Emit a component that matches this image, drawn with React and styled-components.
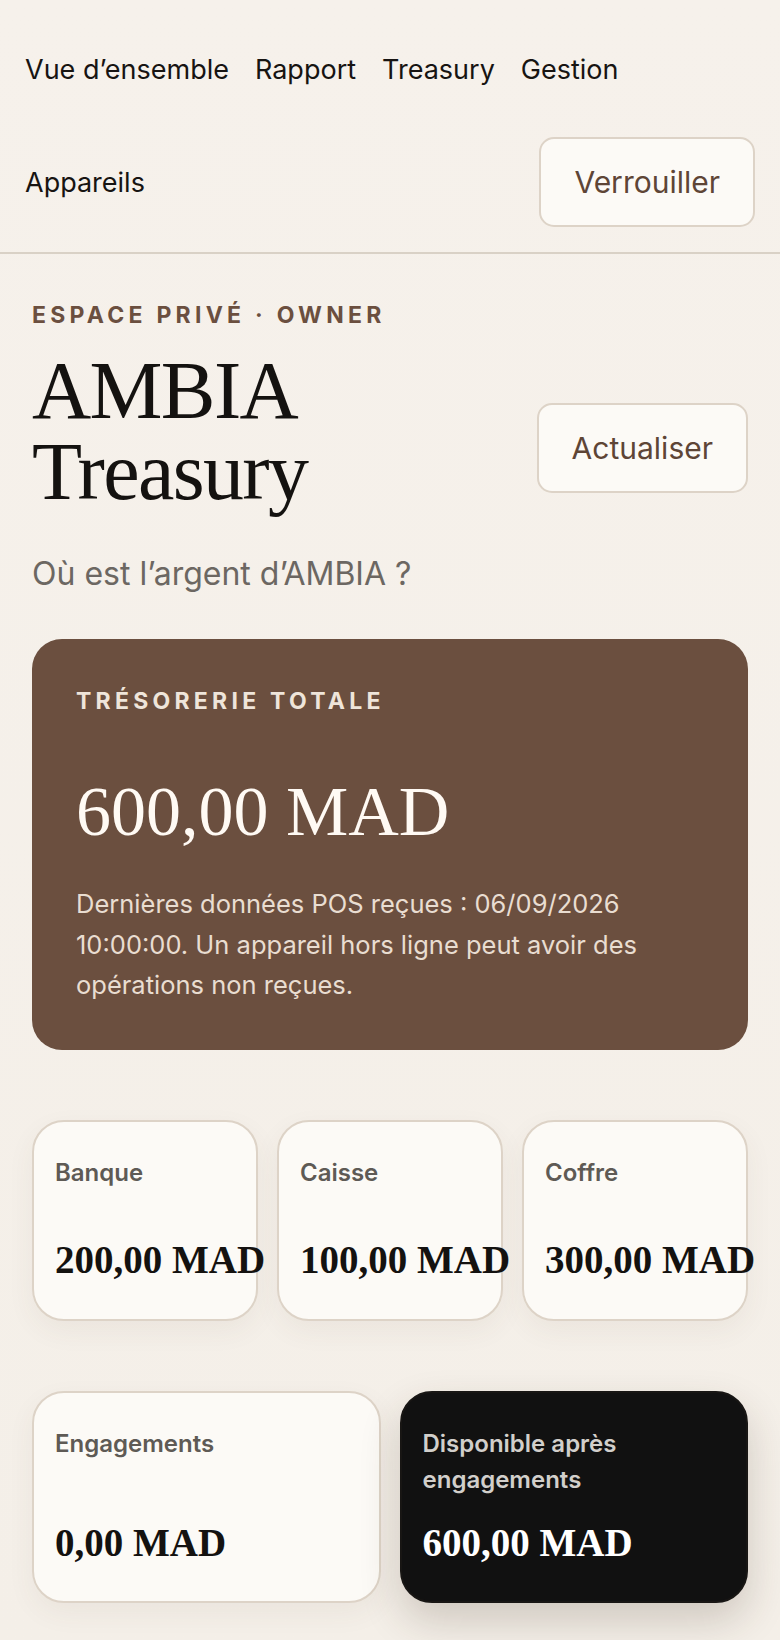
import React from "react";
import styled, { createGlobalStyle } from "styled-components";

const Global = createGlobalStyle`
  * { box-sizing: border-box; }
  html, body { margin: 0; padding: 0; background: #f5f0e9; }
  body {
    font-family: Inter, "Noto Sans", "Liberation Sans", sans-serif;
    color: #171412;
    -webkit-font-smoothing: antialiased;
  }
  #root { min-height: 1640px; }
`;

const Page = styled.div`
  min-height: 1640px;
  background: linear-gradient(180deg, #f6f1eb 0%, #f4efe8 100%);
`;

const Header = styled.header`
  display: flex;
  flex-wrap: wrap;
  align-items: center;
  column-gap: 26px;
  row-gap: 23px;
  padding: 24px 25px 25px 25px;
  border-bottom: 2px solid #d9d1c6;
`;

const NavLink = styled.a`
  display: flex;
  align-items: center;
  min-height: 90px;
  font-size: 27px;
  font-weight: 400;
  color: #171412;
  text-decoration: none;
`;

const GhostButton = styled.button`
  margin-left: auto;
  flex-shrink: 0;
  height: 90px;
  padding: 0 33px;
  border-radius: 15px;
  border: 2px solid #ddd3c7;
  background: #fcfaf6;
  color: #5e4536;
  font-family: Inter, "Noto Sans", sans-serif;
  font-size: 30px;
  font-weight: 400;
  cursor: pointer;
`;

const Main = styled.main`
  display: flex;
  flex-direction: column;
  padding: 48px 32px 40px 32px;
`;

const Hero = styled.section`
  display: flex;
  align-items: center;
  justify-content: space-between;
  gap: 24px;
`;

const HeroText = styled.div`
  display: flex;
  flex-direction: column;
`;

const Eyebrow = styled.div`
  font-size: 23px;
  font-weight: 700;
  letter-spacing: 0.185em;
  color: #6b4f3f;
  line-height: 1.2;
`;

const Title = styled.h1`
  margin: 20px 0 0 0;
  font-family: "Liberation Serif", "Times New Roman", serif;
  font-weight: 400;
  font-size: 82px;
  line-height: 81px;
  letter-spacing: -0.02em;
  color: #141210;
`;

const Subtitle = styled.p`
  margin: 42px 0 0 0;
  font-size: 32px;
  line-height: 1.25;
  color: #6c6762;
`;

const TotalCard = styled.section`
  margin-top: 45px;
  background: #6b4f3f;
  border-radius: 30px;
  padding: 49px 44px 44px 44px;
  color: #f3e9df;
`;

const CardEyebrow = styled.div`
  font-size: 23px;
  font-weight: 700;
  letter-spacing: 0.185em;
  line-height: 1.2;
  color: #efe5da;
`;

const TotalAmount = styled.div`
  margin-top: 55px;
  font-family: "Liberation Serif", "Times New Roman", serif;
  font-size: 70px;
  line-height: 1.2;
  color: #fffaf4;
`;

const Note = styled.p`
  margin: 30px 0 0 0;
  font-size: 25.5px;
  line-height: 40.5px;
  color: #e9ddd1;
`;

const Grid = styled.div`
  margin-top: 70px;
  display: grid;
  grid-template-columns: repeat(${(p) => p.$cols}, 1fr);
  gap: 19px;
`;

const StatCard = styled.div`
  min-height: 201px;
  display: flex;
  flex-direction: column;
  justify-content: space-between;
  gap: 22px;
  padding: 33px 21px 35px 21px;
  border-radius: 32px;
  border: ${(p) => (p.$dark ? "2px solid #181614" : "2px solid #ddd3c7")};
  background: ${(p) => (p.$dark ? "#111111" : "#fcfaf6")};
  box-shadow: ${(p) =>
    p.$dark
      ? "0 18px 40px rgba(60, 45, 30, 0.2)"
      : "0 10px 28px rgba(90, 70, 50, 0.06)"};
  min-width: 0;
`;

const StatLabel = styled.div`
  font-size: 24px;
  font-weight: 600;
  line-height: 36px;
  color: ${(p) => (p.$dark ? "#d2cfcb" : "#5e5a55")};
`;

const StatValue = styled.div`
  font-family: "Liberation Serif", "Times New Roman", serif;
  font-size: 39px;
  font-weight: 700;
  line-height: 1.2;
  white-space: nowrap;
  color: ${(p) => (p.$dark ? "#ffffff" : "#141210")};
`;

const accounts = [
  { label: "Banque", value: "200,00 MAD" },
  { label: "Caisse", value: "100,00 MAD" },
  { label: "Coffre", value: "300,00 MAD" },
];

const summary = [
  { label: "Engagements", value: "0,00 MAD" },
  { label: "Disponible après engagements", value: "600,00 MAD", dark: true },
];

export default function App() {
  return (
    <>
      <Global />
      <Page>
        <Header>
          <NavLink href="#">Vue d’ensemble</NavLink>
          <NavLink href="#">Rapport</NavLink>
          <NavLink href="#">Treasury</NavLink>
          <NavLink href="#">Gestion</NavLink>
          <NavLink href="#">Appareils</NavLink>
          <GhostButton>Verrouiller</GhostButton>
        </Header>
        <Main>
          <Hero>
            <HeroText>
              <Eyebrow>ESPACE PRIVÉ · OWNER</Eyebrow>
              <Title>AMBIA Treasury</Title>
              <Subtitle>Où est l’argent d’AMBIA ?</Subtitle>
            </HeroText>
            <GhostButton>Actualiser</GhostButton>
          </Hero>

          <TotalCard>
            <CardEyebrow>TRÉSORERIE TOTALE</CardEyebrow>
            <TotalAmount>600,00 MAD</TotalAmount>
            <Note>
              Dernières données POS reçues : 06/09/2026 10:00:00. Un appareil
              hors ligne peut avoir des opérations non reçues.
            </Note>
          </TotalCard>

          <Grid $cols={3}>
            {accounts.map((a) => (
              <StatCard key={a.label}>
                <StatLabel>{a.label}</StatLabel>
                <StatValue>{a.value}</StatValue>
              </StatCard>
            ))}
          </Grid>

          <Grid $cols={2}>
            {summary.map((s) => (
              <StatCard key={s.label} $dark={s.dark}>
                <StatLabel $dark={s.dark}>{s.label}</StatLabel>
                <StatValue $dark={s.dark}>{s.value}</StatValue>
              </StatCard>
            ))}
          </Grid>
        </Main>
      </Page>
    </>
  );
}
